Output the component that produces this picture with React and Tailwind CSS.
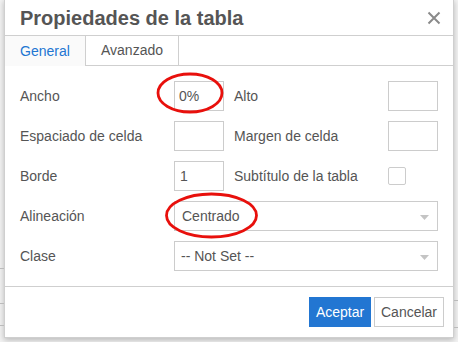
export default function App() {
  const font = { fontFamily: '"Liberation Sans", Arial, sans-serif' };
  const Row = ({ children }) => <div className="flex items-center h-[30px]">{children}</div>;
  const Caret = () => (
    <svg width="9" height="5" viewBox="0 0 9 5" className="absolute right-[8px] top-[13px]">
      <path d="M0 0 L9 0 L4.5 5 Z" fill="#c4c4c4" />
    </svg>
  );
  return (
    <div className="relative w-[458px] h-[342px] overflow-hidden bg-[#f3f3f3]" style={font}>
      <div className="absolute left-0 top-[268px] w-[4px] h-[1px] bg-[#bbb]" />
      <div className="absolute left-0 top-[303px] w-[4px] h-[1px] bg-[#bbb]" />
      <div className="absolute left-0 top-[325px] w-[4px] h-[1px] bg-[#bbb]" />
      <div className="absolute right-0 top-[300px] w-[4px] h-[1px] bg-[#bbb]" />
      <div className="absolute right-0 top-[327px] w-[4px] h-[1px] bg-[#bbb]" />
      <div className="ml-[4px] mt-[-1px] w-[450px] bg-white border border-[#cfcfcf] shadow-[0_2px_6px_rgba(0,0,0,0.25)] text-[#555]">
        <div className="h-[36px] border-b border-[#cfcfcf] flex items-center justify-between pl-[15px] pr-[12px]">
          <span className="text-[20px] font-bold text-[#555] leading-none">Propiedades de la tabla</span>
          <svg width="14" height="14" viewBox="0 0 14 14">
            <path d="M1.5 1.5 L12.5 12.5 M12.5 1.5 L1.5 12.5" stroke="#8a8a8a" strokeWidth="2" />
          </svg>
        </div>
        <div className="flex h-[30px] border-b border-[#cfcfcf]">
          <div className="w-[81px] h-[30px] bg-[#fafafa] border-r border-[#cfcfcf] flex items-center pl-[15px] text-[14px] text-[#2276d2] -mb-[1px]">General</div>
          <div className="w-[93px] border-r border-[#cfcfcf] flex items-center pl-[15px] text-[14px] text-[#555]">Avanzado</div>
        </div>
        <div className="px-[15px] pt-[15px] pb-[15px] flex flex-col gap-[10px] text-[14px]">
          <Row>
            <span className="w-[154px]">Ancho</span>
            <div className="w-[50px] h-[30px] border border-[#ccc] flex items-center pl-[4px]">0%</div>
            <span className="ml-[10px] w-[154px]">Alto</span>
            <div className="w-[50px] h-[30px] border border-[#ccc]" />
          </Row>
          <Row>
            <span className="w-[154px]">Espaciado de celda</span>
            <div className="w-[50px] h-[30px] border border-[#ccc]" />
            <span className="ml-[10px] w-[154px]">Margen de celda</span>
            <div className="w-[50px] h-[30px] border border-[#ccc]" />
          </Row>
          <Row>
            <span className="w-[154px]">Borde</span>
            <div className="w-[50px] h-[30px] border border-[#ccc] flex items-center pl-[5px]">1</div>
            <span className="ml-[10px] w-[154px]">Subtítulo de la tabla</span>
            <div className="w-[18px] h-[18px] border border-[#ccc] rounded-[2px]" />
          </Row>
          <Row>
            <span className="w-[154px]">Alineación</span>
            <div className="relative w-[264px] h-[30px] border border-[#ccc] flex items-center pl-[7px]">
              Centrado
              <Caret />
            </div>
          </Row>
          <Row>
            <span className="w-[154px]">Clase</span>
            <div className="relative w-[264px] h-[30px] border border-[#ccc] flex items-center pl-[6px]">
              -- Not Set --
              <Caret />
            </div>
          </Row>
        </div>
        <div className="border-t border-[#cfcfcf] flex justify-end gap-[3px] pt-[10px] pb-[10px] pr-[9px] text-[14px]">
          <button className="h-[30px] w-[62px] bg-[#2276d2] text-white">Aceptar</button>
          <button className="h-[30px] w-[70px] bg-white border border-[#ccc] text-[#555]">Cancelar</button>
        </div>
      </div>
      <svg className="absolute left-0 top-0 pointer-events-none" width="458" height="342">
        <ellipse cx="190" cy="93" rx="32" ry="19" fill="none" stroke="#e8100c" strokeWidth="2.8" />
        <ellipse cx="211.5" cy="215.5" rx="45" ry="21.5" fill="none" stroke="#e8100c" strokeWidth="2.8" />
      </svg>
    </div>
  );
}
